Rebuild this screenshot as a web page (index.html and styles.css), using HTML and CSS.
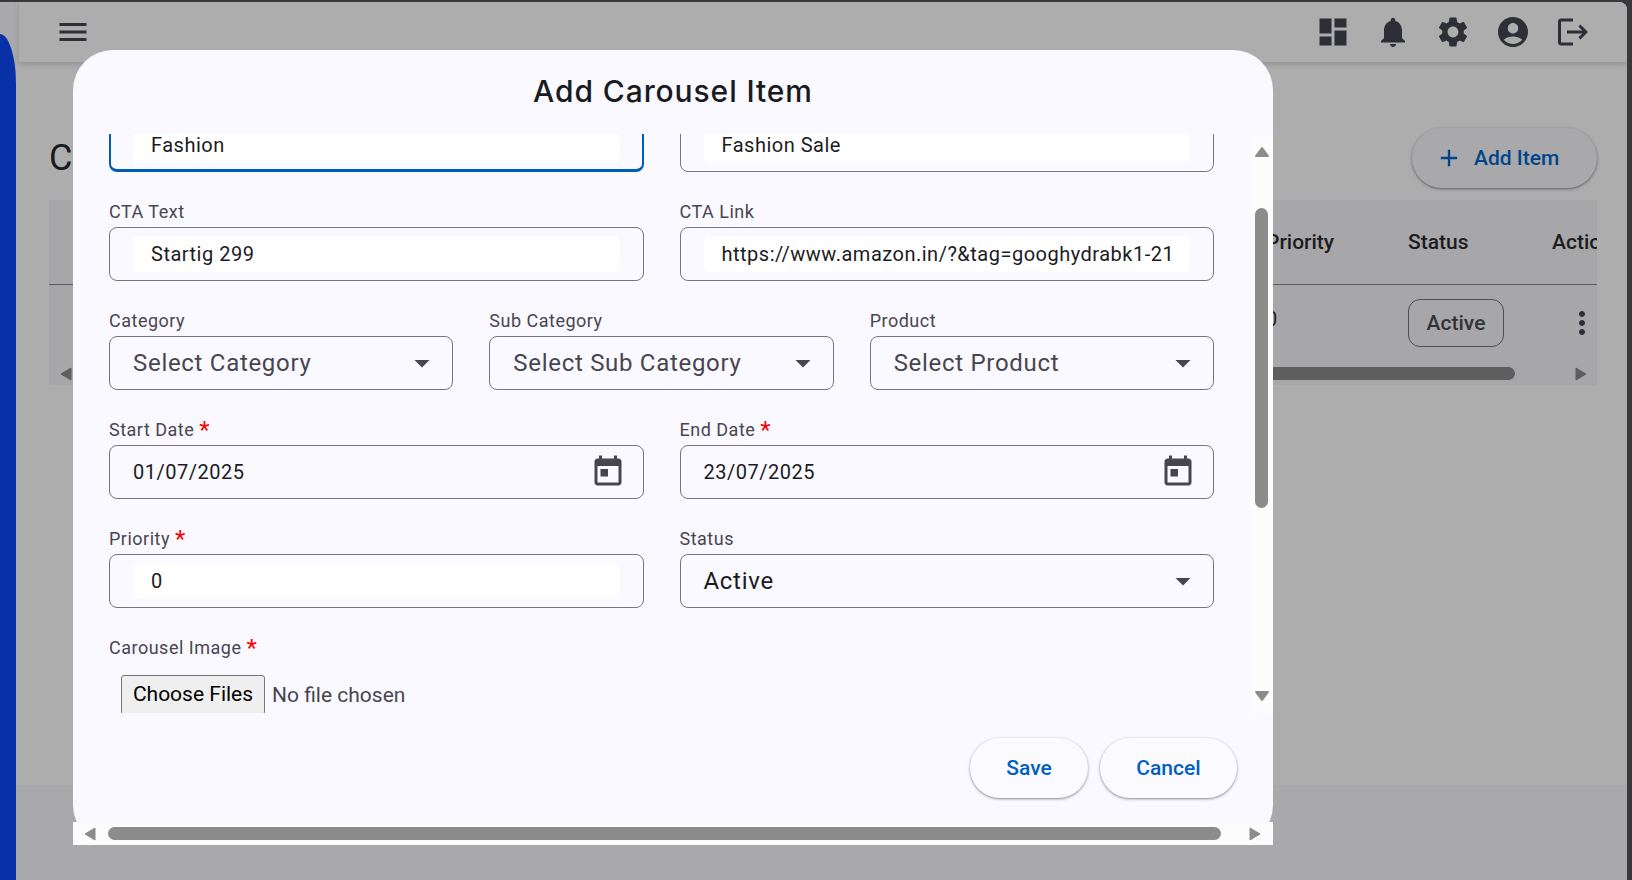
FILE: index.html
```html
<!DOCTYPE html>
<html lang="en">
<head>
    <meta charset="UTF-8">
    <meta name="viewport" content="width=device-width, initial-scale=1.0">
    <title>Carousel Items</title>
    <link rel="stylesheet" href="styles.css">
</head>
<body>
    <div class="page">
        <div class="sidebar"></div>
        <div class="main">
            <header class="topbar">
                <svg class="icon menu-icon" viewBox="0 0 24 24"><path d="M3 18h18v-2H3v2zm0-5h18v-2H3v2zm0-7v2h18V6H3z"/></svg>
                <div class="topbar-icons">
                    <svg class="icon" viewBox="0 0 24 24"><path d="M3 13h8V3H3v10zm0 8h8v-6H3v6zm10 0h8V11h-8v10zm0-18v6h8V3h-8z"/></svg>
                    <svg class="icon" viewBox="0 0 24 24"><path d="M12 22c1.1 0 2-.9 2-2h-4c0 1.1.89 2 2 2zm6-6v-5c0-3.07-1.64-5.64-4.5-6.32V4c0-.83-.67-1.5-1.5-1.5s-1.5.67-1.5 1.5v.68C7.63 5.36 6 7.92 6 11v5l-2 2v1h16v-1l-2-2z"/></svg>
                    <svg class="icon" viewBox="0 0 24 24"><path d="M19.14 12.94c.04-.3.06-.61.06-.94 0-.32-.02-.64-.07-.94l2.03-1.58c.18-.14.23-.41.12-.61l-1.92-3.32c-.12-.22-.37-.29-.59-.22l-2.39.96c-.5-.38-1.03-.7-1.62-.94l-.36-2.54c-.04-.24-.24-.41-.48-.41h-3.84c-.24 0-.43.17-.47.41l-.36 2.54c-.59.24-1.13.57-1.62.94l-2.39-.96c-.22-.08-.47 0-.59.22L2.74 8.87c-.12.21-.08.47.12.61l2.03 1.58c-.05.3-.09.63-.09.94s.02.64.07.94l-2.03 1.58c-.18.14-.23.41-.12.61l1.92 3.32c.12.22.37.29.59.22l2.39-.96c.5.38 1.03.7 1.62.94l.36 2.54c.05.24.24.41.48.41h3.84c.24 0 .44-.17.47-.41l.36-2.54c.59-.24 1.13-.56 1.62-.94l2.39.96c.22.08.47 0 .59-.22l1.92-3.32c.12-.22.07-.47-.12-.61l-2.01-1.58zM12 15.6c-1.98 0-3.6-1.62-3.6-3.6s1.62-3.6 3.6-3.6 3.6 1.62 3.6 3.6-1.62 3.6-3.6 3.6z"/></svg>
                    <svg class="icon" viewBox="0 0 24 24"><path d="M12 2C6.48 2 2 6.48 2 12s4.48 10 10 10 10-4.48 10-10S17.52 2 12 2zm0 4c1.93 0 3.5 1.57 3.5 3.5S13.93 13 12 13s-3.5-1.57-3.5-3.5S10.07 6 12 6zm0 14c-2.03 0-4.43-.82-6.14-2.88C7.55 15.8 9.68 15 12 15s4.45.8 6.14 2.12C16.43 19.18 14.03 20 12 20z"/></svg>
                    <svg class="icon" viewBox="0 0 24 24"><path d="M17 7l-1.41 1.41L18.17 11H8v2h10.17l-2.58 2.58L17 17l5-5zM4 5h8V3H4c-1.1 0-2 .9-2 2v14c0 1.1.9 2 2 2h8v-2H4V5z"/></svg>
                </div>
            </header>
            <section class="content">
                <div class="content-head">
                    <h2 class="page-title">C</h2>
                    <button class="add-btn">
                        <svg class="add-icon" viewBox="0 0 24 24"><path d="M19 13h-6v6h-2v-6H5v-2h6V5h2v6h6v2z"/></svg>
                        Add Item
                    </button>
                </div>
                <div class="table-card">
                    <div class="table-row table-head">
                        <div class="cell-fill"></div>
                        <div class="cell-priority">Priority</div>
                        <div class="cell-status">Status</div>
                        <div class="cell-action">Actions</div>
                    </div>
                    <div class="table-row table-body">
                        <div class="cell-fill"></div>
                        <div class="cell-priority value">0</div>
                        <div class="cell-status"><span class="chip">Active</span></div>
                        <div class="cell-action">
                            <svg class="icon" viewBox="0 0 24 24"><path d="M12 8c1.1 0 2-.9 2-2s-.9-2-2-2-2 .9-2 2 .9 2 2 2zm0 2c-1.1 0-2 .9-2 2s.9 2 2 2 2-.9 2-2-.9-2-2-2zm0 6c-1.1 0-2 .9-2 2s.9 2 2 2 2-.9 2-2-.9-2-2-2z"/></svg>
                        </div>
                    </div>
                    <div class="table-scroll">
                        <svg class="arrow-h" viewBox="0 0 12 14"><path d="M11 1v12L1 7z"/></svg>
                        <div class="table-thumb"></div>
                        <svg class="arrow-h" viewBox="0 0 12 14"><path d="M1 1v12l10-6z"/></svg>
                    </div>
                </div>
            </section>
        </div>

        <div class="dialog">
            <h2 class="dialog-title">Add Carousel Item</h2>
            <div class="dialog-middle">
                <div class="form">
                    <div class="row">
                        <div class="field">
                            <div class="box box-focus"><span class="inner">Fashion</span></div>
                        </div>
                        <div class="field">
                            <div class="box"><span class="inner">Fashion Sale</span></div>
                        </div>
                    </div>
                    <div class="row">
                        <div class="field">
                            <label class="lbl">CTA Text</label>
                            <div class="box"><span class="inner">Startig 299</span></div>
                        </div>
                        <div class="field">
                            <label class="lbl">CTA Link</label>
                            <div class="box"><span class="inner">https://www.amazon.in/?&amp;tag=googhydrabk1-21</span></div>
                        </div>
                    </div>
                    <div class="row row-3">
                        <div class="field">
                            <label class="lbl">Category</label>
                            <div class="box box-select">
                                <span class="placeholder">Select Category</span>
                                <svg class="icon" viewBox="0 0 24 24"><path d="M7 10l5 5 5-5z"/></svg>
                            </div>
                        </div>
                        <div class="field">
                            <label class="lbl">Sub Category</label>
                            <div class="box box-select">
                                <span class="placeholder">Select Sub Category</span>
                                <svg class="icon" viewBox="0 0 24 24"><path d="M7 10l5 5 5-5z"/></svg>
                            </div>
                        </div>
                        <div class="field">
                            <label class="lbl">Product</label>
                            <div class="box box-select">
                                <span class="placeholder">Select Product</span>
                                <svg class="icon" viewBox="0 0 24 24"><path d="M7 10l5 5 5-5z"/></svg>
                            </div>
                        </div>
                    </div>
                    <div class="row">
                        <div class="field">
                            <label class="lbl">Start Date <span class="req">*</span></label>
                            <div class="box box-date">
                                <span class="date-text">01/07/2025</span>
                                <svg class="icon" viewBox="0 0 24 24"><path d="M19 3h-1V1h-2v2H8V1H6v2H5c-1.11 0-1.99.9-1.99 2L3 19c0 1.1.89 2 2 2h14c1.1 0 2-.9 2-2V5c0-1.1-.9-2-2-2zm0 16H5V8h14v11zM7 10h5v5H7z"/></svg>
                            </div>
                        </div>
                        <div class="field">
                            <label class="lbl">End Date <span class="req">*</span></label>
                            <div class="box box-date">
                                <span class="date-text">23/07/2025</span>
                                <svg class="icon" viewBox="0 0 24 24"><path d="M19 3h-1V1h-2v2H8V1H6v2H5c-1.11 0-1.99.9-1.99 2L3 19c0 1.1.89 2 2 2h14c1.1 0 2-.9 2-2V5c0-1.1-.9-2-2-2zm0 16H5V8h14v11zM7 10h5v5H7z"/></svg>
                            </div>
                        </div>
                    </div>
                    <div class="row">
                        <div class="field">
                            <label class="lbl">Priority <span class="req">*</span></label>
                            <div class="box"><span class="inner">0</span></div>
                        </div>
                        <div class="field">
                            <label class="lbl">Status</label>
                            <div class="box box-select">
                                <span class="selected">Active</span>
                                <svg class="icon" viewBox="0 0 24 24"><path d="M7 10l5 5 5-5z"/></svg>
                            </div>
                        </div>
                    </div>
                    <div class="field">
                        <label class="lbl">Carousel Image <span class="req">*</span></label>
                        <div class="file-row">
                            <button class="file-btn">Choose Files</button>
                            <span class="file-name">No file chosen</span>
                        </div>
                    </div>
                </div>
                <div class="vbar">
                    <svg class="arrow-v" viewBox="0 0 16 12"><path d="M8 2l6 8H2z"/></svg>
                    <div class="vbar-thumb"></div>
                    <svg class="arrow-v arrow-down" viewBox="0 0 16 12"><path d="M2 2h12l-6 8z"/></svg>
                </div>
            </div>
            <div class="dialog-actions">
                <button class="pill-btn pill-save">Save</button>
                <button class="pill-btn pill-cancel">Cancel</button>
            </div>
            <div class="hbar">
                <svg class="arrow-h light" viewBox="0 0 12 14"><path d="M11 1v12L1 7z"/></svg>
                <div class="hbar-thumb"></div>
                <svg class="arrow-h light" viewBox="0 0 12 14"><path d="M1 1v12l10-6z"/></svg>
            </div>
        </div>
    </div>
</body>
</html>
```

FILE: styles.css
```css
* {
    box-sizing: border-box;
}
body {
    margin: 0;
    height: 880px;
    overflow: hidden;
    padding: 2px 5px 0 0;
    background-color: #38383a;
    font-family: Roboto, sans-serif;
    color: #1c1b1f;
}
.page {
    position: relative;
    display: flex;
    height: 878px;
    background-color: #a9a9ab;
    border-top-right-radius: 8px;
    overflow: hidden;
}
.sidebar {
    width: 16px;
    margin-top: 32px;
    background-color: #0a30a8;
    border-top-right-radius: 16px 50px;
    flex-shrink: 0;
}
.main {
    flex: 1;
    padding-left: 3px;
    min-width: 0;
    background: linear-gradient(#adadad, #adadad) no-repeat 0 0 / 100% 783px;
}
.icon {
    display: block;
    width: 36px;
    height: 36px;
    fill: #2e2e36;
    flex-shrink: 0;
}

/* top bar */
.topbar {
    display: flex;
    align-items: center;
    justify-content: space-between;
    height: 60px;
    padding: 0 36px;
    box-shadow: 0 2px 6px rgba(0, 0, 0, 0.18);
    background-color: #adadad;
}
.topbar-icons {
    display: flex;
    gap: 24px;
}

/* page behind the dialog */
.content {
    height: 723px;
    padding: 66px 30px 0;
}
.content-head {
    display: flex;
    justify-content: space-between;
    align-items: center;
    height: 60px;
    margin-bottom: 12px;
}
.page-title {
    margin: 0;
    font-size: 36px;
    font-weight: 400;
    color: #1a1a1c;
}
.add-btn {
    display: flex;
    align-items: center;
    gap: 11px;
    width: 185px;
    height: 60px;
    padding: 0 0 0 23px;
    border: none;
    border-radius: 30px;
    background-color: #a9a9ab;
    color: #00458a;
    font-family: Roboto, sans-serif;
    font-size: 21px;
    font-weight: 500;
    box-shadow: 0 1px 3px 1px rgba(0, 0, 0, 0.12), 0 1px 2px rgba(0, 0, 0, 0.3);
}
.add-icon {
    width: 28px;
    height: 28px;
    fill: #00458a;
}
.table-card {
    height: 185px;
    background-color: #a7a7a9;
    overflow: hidden;
    position: relative;
}
.table-row {
    display: grid;
    grid-template-columns: 1217px 142px 144px 45px;
    white-space: nowrap;
}
.table-head {
    height: 85px;
    align-items: center;
    border-bottom: 1px solid #5c5c5e;
    font-size: 21px;
    font-weight: 500;
    color: #1c1c1e;
}
.table-head .cell-action {
    overflow: hidden;
}
.table-body {
    height: 77px;
    padding-bottom: 2px;
    align-items: center;
}
.value {
    font-size: 20px;
    margin-top: -8px;
}
.chip {
    display: inline-flex;
    align-items: center;
    justify-content: center;
    width: 96px;
    height: 48px;
    border: 1px solid #4e4e54;
    border-radius: 12px;
    font-size: 21px;
    font-weight: 500;
    color: #333338;
}
.cell-action .icon {
    margin-left: 12px;
}
.table-scroll {
    display: flex;
    align-items: center;
    height: 23px;
    padding: 0 9px 0 11px;
}
.arrow-h {
    display: block;
    width: 12px;
    height: 14px;
    fill: #5e5e5e;
    stroke: #5e5e5e;
    stroke-width: 1;
    stroke-linejoin: round;
    flex-shrink: 0;
}
.table-thumb {
    width: 1430px;
    height: 13px;
    margin: 0 60px 0 13px;
    border-radius: 7px;
    background-color: #5e5e5e;
}

/* dialog */
.dialog {
    position: absolute;
    left: 73px;
    top: 48px;
    width: 1200px;
    height: 795px;
    display: flex;
    flex-direction: column;
    background-color: #f9f9ff;
    border-radius: 40px;
}
.dialog-title {
    height: 84px;
    margin: 0;
    padding-top: 19px;
    text-align: center;
    font-family: Inter, sans-serif;
    font-size: 30px;
    font-weight: 500;
    line-height: 44px;
    letter-spacing: 0.9px;
    color: #1a1b1f;
}
.dialog-middle {
    display: flex;
    height: 579px;
}
.form {
    flex: 1;
    min-width: 0;
    display: flex;
    flex-direction: column;
    gap: 27px;
    padding: 0 36px;
    overflow: hidden;
}
.row {
    display: grid;
    grid-template-columns: repeat(2, minmax(0, 1fr));
    gap: 36px;
    flex-shrink: 0;
}
.row:first-child {
    margin-top: -16px;
}
.row-3 {
    grid-template-columns: repeat(3, minmax(0, 1fr));
}
.lbl {
    display: block;
    height: 25px;
    padding-top: 1px;
    margin-bottom: 3px;
    font-size: 18px;
    line-height: 24px;
    letter-spacing: 0.5px;
    color: #49454f;
    white-space: nowrap;
}
.req {
    color: #f00;
    font-size: 24px;
    line-height: 0;
    vertical-align: -2px;
}
.box {
    display: flex;
    align-items: center;
    height: 54px;
    padding: 0 23px;
    border: 1px solid #79747e;
    border-radius: 8px;
}
.box-focus {
    border: 2px solid #005cbb;
    border-bottom-width: 3px;
    padding: 0 22px;
}
.inner {
    display: block;
    width: 100%;
    height: 36px;
    padding: 0 18px;
    border-radius: 6px;
    background-color: #fff;
    font-size: 20px;
    line-height: 36px;
    letter-spacing: 0.5px;
    white-space: nowrap;
}
.box-select {
    justify-content: space-between;
    padding: 0 12px 0 23px;
    font-size: 24px;
    letter-spacing: 0.7px;
}
.box-select .icon {
    fill: #49454f;
}
.placeholder {
    color: #49454f;
}
.box-date {
    justify-content: space-between;
    padding: 0 17px 0 23px;
    font-size: 20px;
    letter-spacing: 0.5px;
}
.box-date .icon {
    fill: #49454f;
}
.file-row {
    display: flex;
    align-items: center;
    gap: 7px;
    padding: 12px 0 0 12px;
}
.file-btn {
    width: 144px;
    height: 40px;
    padding: 0 0 3px;
    border: 1px solid #767676;
    border-radius: 3px;
    background-color: #efefef;
    color: #000;
    font-family: Roboto, sans-serif;
    font-size: 21px;
}
.file-name {
    font-size: 21px;
    color: #49454f;
}
.vbar {
    display: flex;
    flex-direction: column;
    align-items: center;
    width: 23px;
    background-color: #fcfcfc;
}
.arrow-v {
    display: block;
    width: 16px;
    height: 12px;
    margin-top: 12px;
    fill: #8c8c8c;
    stroke: #8c8c8c;
    stroke-width: 2;
    stroke-linejoin: round;
}
.arrow-down {
    margin-top: auto;
    margin-bottom: 11px;
}
.vbar-thumb {
    width: 13px;
    height: 300px;
    margin-top: 50px;
    border-radius: 7px;
    background-color: #8c8c8c;
}
.dialog-actions {
    display: flex;
    justify-content: flex-end;
    gap: 12px;
    height: 109px;
    padding: 25px 36px 0 0;
}
.pill-btn {
    height: 60px;
    border: none;
    border-radius: 30px;
    background-color: #fafaff;
    color: #0060c0;
    font-family: Roboto, sans-serif;
    font-size: 21px;
    font-weight: 500;
    box-shadow: 0 1px 3px 1px rgba(0, 0, 0, 0.12), 0 1px 2px rgba(0, 0, 0, 0.3);
}
.pill-save {
    width: 118px;
}
.pill-cancel {
    width: 137px;
}
.hbar {
    display: flex;
    align-items: center;
    height: 23px;
    padding: 0 11px;
    background-color: #fcfcfc;
}
.arrow-h.light {
    fill: #8c8c8c;
    stroke: #8c8c8c;
}
.hbar-thumb {
    width: 1113px;
    height: 13px;
    margin: 0 28px 0 12px;
    border-radius: 7px;
    background-color: #8c8c8c;
}
```
